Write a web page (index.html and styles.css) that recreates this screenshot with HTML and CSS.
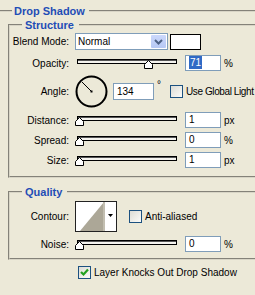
FILE: index.html
```html
<!DOCTYPE html>
<html lang="en">
  <head>
    <meta charset="UTF-8" />
    <title>Drop Shadow</title>
    <link rel="stylesheet" href="styles.css">
  </head>
  <body>
    <fieldset class="group outer">
      <legend>Drop Shadow</legend>

      <fieldset class="group">
        <legend>Structure</legend>

        <div class="row blend-row">
          <span class="lbl">Blend Mode:</span>
          <div class="select">
            <span class="select-text">Normal</span>
            <span class="drop-btn">
              <svg width="15" height="13" viewBox="0 0 15 13"><polyline points="4,5 7.5,8.5 11,5" fill="none" stroke="#4d6185" stroke-width="2"/></svg>
            </span>
          </div>
          <div class="swatch"></div>
        </div>

        <div class="row slider-row opacity-row">
          <span class="lbl">Opacity:</span>
          <svg class="slider" width="104" height="16" viewBox="0 0 104 16">
            <rect x="2.5" y="4.5" width="99" height="4" fill="#f4f3ee" stroke="#000"/>
            <line x1="3" y1="5.5" x2="101" y2="5.5" stroke="#555"/>
            <polygon points="73.5,5.5 77.5,9.5 77.5,13.5 69.5,13.5 69.5,9.5" fill="#fff" stroke="#000"/>
          </svg>
          <span class="field"><span class="hl">71</span></span>
          <span class="unit">%</span>
        </div>

        <div class="row angle-row">
          <span class="lbl">Angle:</span>
          <svg class="dial" width="33" height="33" viewBox="0 0 33 33">
            <circle cx="16.5" cy="16.5" r="15" fill="none" stroke="#000" stroke-width="2"/>
            <line x1="16.5" y1="16.5" x2="7" y2="7" stroke="#000"/>
            <rect x="15.5" y="15.5" width="2" height="2" fill="#000"/>
          </svg>
          <span class="field wide">134</span>
          <span class="deg">°</span>
          <span class="check"></span>
          <span class="check-text tight">Use Global Light</span>
        </div>

        <div class="row slider-row">
          <span class="lbl">Distance:</span>
          <svg class="slider" width="104" height="16" viewBox="0 0 104 16">
            <rect x="2.5" y="4.5" width="99" height="4" fill="#f4f3ee" stroke="#000"/>
            <line x1="3" y1="5.5" x2="101" y2="5.5" stroke="#555"/>
            <polygon points="4.5,5.5 8.5,9.5 8.5,13.5 0.5,13.5 0.5,9.5" fill="#fff" stroke="#000"/>
          </svg>
          <span class="field">1</span>
          <span class="unit">px</span>
        </div>

        <div class="row slider-row">
          <span class="lbl">Spread:</span>
          <svg class="slider" width="104" height="16" viewBox="0 0 104 16">
            <rect x="2.5" y="4.5" width="99" height="4" fill="#f4f3ee" stroke="#000"/>
            <line x1="3" y1="5.5" x2="101" y2="5.5" stroke="#555"/>
            <polygon points="4.5,5.5 8.5,9.5 8.5,13.5 0.5,13.5 0.5,9.5" fill="#fff" stroke="#000"/>
          </svg>
          <span class="field">0</span>
          <span class="unit">%</span>
        </div>

        <div class="row slider-row">
          <span class="lbl">Size:</span>
          <svg class="slider" width="104" height="16" viewBox="0 0 104 16">
            <rect x="2.5" y="4.5" width="99" height="4" fill="#f4f3ee" stroke="#000"/>
            <line x1="3" y1="5.5" x2="101" y2="5.5" stroke="#555"/>
            <polygon points="4.5,5.5 8.5,9.5 8.5,13.5 0.5,13.5 0.5,9.5" fill="#fff" stroke="#000"/>
          </svg>
          <span class="field">1</span>
          <span class="unit">px</span>
        </div>
      </fieldset>

      <fieldset class="group quality">
        <legend>Quality</legend>

        <div class="row contour-row">
          <span class="lbl">Contour:</span>
          <svg class="contour" width="42" height="31" viewBox="0 0 42 31">
            <rect x="0.5" y="0.5" width="41" height="30" fill="#fff" stroke="#222"/>
            <polygon points="5,30 29,1 30,1 30,30" fill="#aca797"/>
            <rect x="28" y="1" width="2" height="29" fill="#c2beb0"/>
            <polygon points="33,13 38,13 35.5,16" fill="#000"/>
          </svg>
          <span class="check aa"></span>
          <span class="check-text">Anti-aliased</span>
        </div>

        <div class="row slider-row noise-row">
          <span class="lbl">Noise:</span>
          <svg class="slider" width="104" height="16" viewBox="0 0 104 16">
            <rect x="2.5" y="4.5" width="99" height="4" fill="#f4f3ee" stroke="#000"/>
            <line x1="3" y1="5.5" x2="101" y2="5.5" stroke="#555"/>
            <polygon points="4.5,5.5 8.5,9.5 8.5,13.5 0.5,13.5 0.5,9.5" fill="#fff" stroke="#000"/>
          </svg>
          <span class="field">0</span>
          <span class="unit">%</span>
        </div>
      </fieldset>

      <div class="row knock-row">
        <span class="check checked">
          <svg width="11" height="11" viewBox="0 0 11 11"><polyline points="2,5 4.5,7.5 9,2.5" fill="none" stroke="#21a121" stroke-width="2.2"/></svg>
        </span>
        <span class="check-text">Layer Knocks Out Drop Shadow</span>
      </div>
    </fieldset>
  </body>
</html>
```

FILE: styles.css
```css
body {
  margin: 0;
  background-color: #ece9d8;
  font-family: "Liberation Sans", Arial, sans-serif;
  font-size: 10px;
  color: #000;
  overflow: hidden;
  height: 295px;
}
.group {
  margin: 0;
  padding: 0 0 8px 0;
  border: 2px groove #d8d5c6;
  min-width: 0;
}
.group legend {
  font-weight: bold;
  font-size: 11px;
  line-height: 14px;
  color: #1f4db6;
  padding: 0 5px 0 3px;
  margin-left: 12px;
}
.outer {
  margin: 4px 0 0 -6px;
  width: 320px;
  padding: 0 0 40px 12px;
  box-sizing: border-box;
}
.outer > legend {
  margin-left: 4px;
  padding: 0 4px 0 2px;
}
.quality {
  margin-top: 7px;
  padding: 2px 0 6px 0;
}
.row {
  display: flex;
  align-items: center;
}
.lbl {
  width: 59px;
  margin-right: 6px;
  text-align: right;
  flex: none;
}
.blend-row {
  height: 17px;
  margin-top: 1px;
}
.select {
  width: 93px;
  height: 17px;
  box-sizing: border-box;
  border: 1px solid #7f9db9;
  background: #fff;
  display: flex;
  align-items: center;
}
.select-text {
  flex: 1;
  padding-left: 2px;
}
.drop-btn {
  width: 15px;
  height: 13px;
  margin-right: 1px;
  border-radius: 1px;
  background: linear-gradient(#cbd8fc, #b6c8f4);
  display: flex;
}
.swatch {
  width: 31px;
  height: 16px;
  box-sizing: border-box;
  margin-left: 2px;
  border: 1px solid #000;
  background: #fff;
}
.slider-row {
  height: 16px;
  margin-top: 4px;
}
.opacity-row {
  margin-top: 5px;
}
.slider {
  flex: none;
  margin-right: 6px;
}
.field {
  width: 36px;
  height: 16px;
  box-sizing: border-box;
  border: 1px solid #7f9db9;
  background: #fff;
  padding-left: 3px;
  line-height: 14px;
}
.field.wide {
  width: 41px;
  height: 17px;
  line-height: 15px;
}
.hl {
  background: #316ac5;
  color: #fff;
  padding: 1px 1px;
}
.unit {
  margin-left: 3px;
}
.angle-row {
  height: 33px;
  margin-top: 4px;
  margin-bottom: 1px;
}
.dial {
  flex: none;
  margin-right: 5px;
}
.deg {
  width: 10px;
  margin-left: 3px;
  align-self: flex-start;
  margin-top: 6px;
  line-height: 8px;
}
.check {
  width: 13px;
  height: 13px;
  box-sizing: border-box;
  border: 1px solid #1c5180;
  background: linear-gradient(135deg, #dcdcd5, #fbfbf9);
  margin-left: 3px;
  display: flex;
  align-items: center;
  justify-content: center;
  flex: none;
}
.check-text {
  margin-left: 3px;
  white-space: nowrap;
}
.check-text.tight {
  letter-spacing: -0.4px;
}
.contour-row {
  height: 31px;
}
.contour {
  flex: none;
}
.check.aa {
  margin-left: 12px;
}
.knock-row {
  margin-top: 6px;
  height: 13px;
}
.knock-row .check {
  margin-left: 70px;
}
```
